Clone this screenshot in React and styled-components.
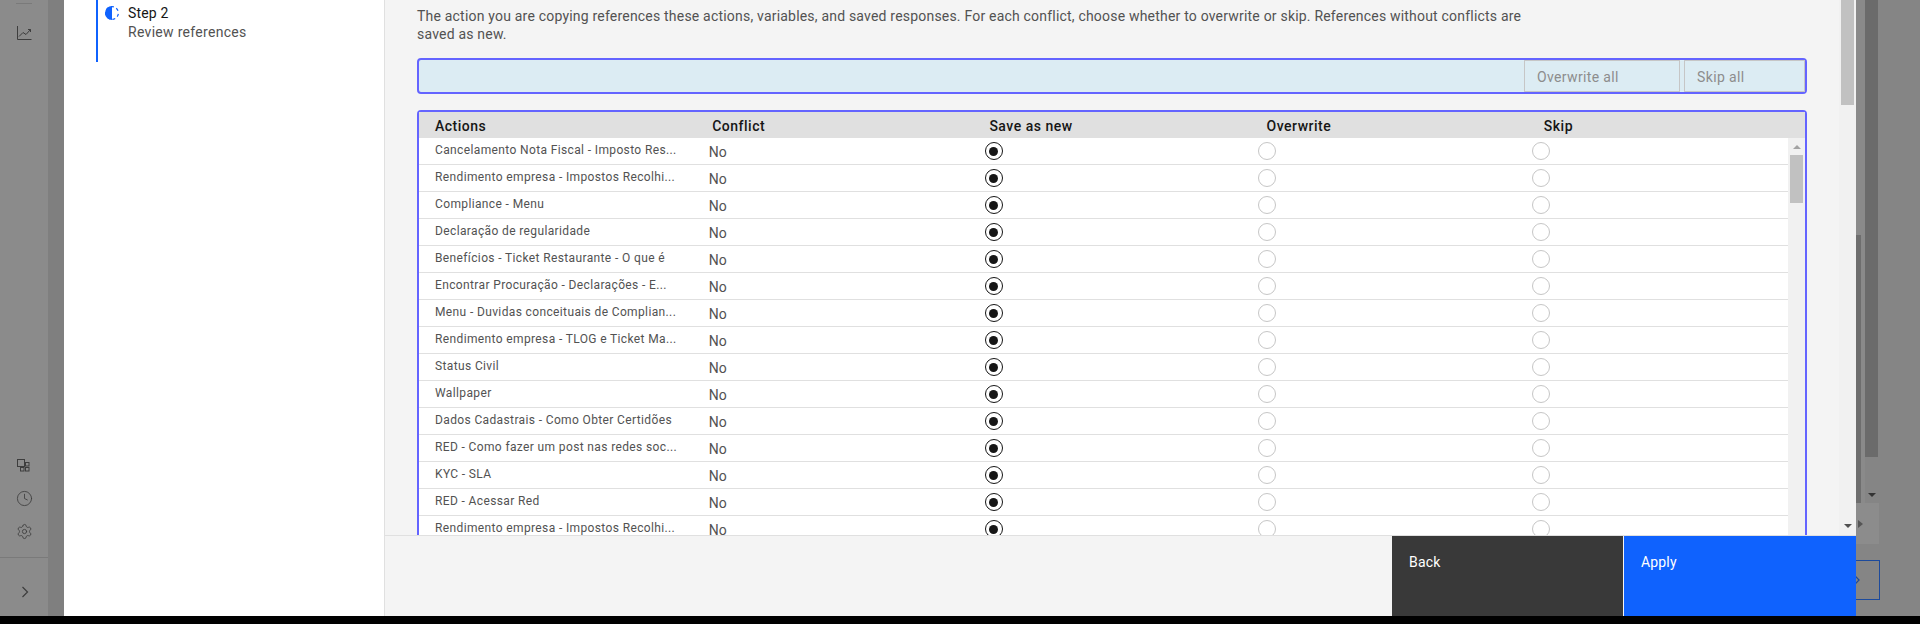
import styled, { createGlobalStyle } from "styled-components";
import { Clock, Settings } from "lucide-react";

const GlobalStyle = createGlobalStyle`
  html, body {
    margin: 0;
    padding: 0;
    background: #000;
    font-family: Roboto, "Noto Sans", sans-serif;
  }
  * {
    box-sizing: border-box;
  }
`;

const Page = styled.div`
  display: flex;
  height: 616px;
  overflow: hidden;
  background: #8b8b8b;
`;

const BlackBar = styled.div`
  height: 8px;
  background: #000;
`;

const Rail = styled.nav`
  width: 48px;
  display: flex;
  flex-direction: column;
  justify-content: space-between;
  align-items: center;
  color: #3d3d3d;
  background: #8b8b8b;
`;

const RailTop = styled.div`
  display: flex;
  flex-direction: column;
  align-items: center;
  padding-top: 3px;
`;

const RailLine = styled.div`
  width: 16px;
  height: 1px;
  background: #7a7a7a;
  margin-bottom: 21px;
`;

const RailBottom = styled.div`
  width: 100%;
  display: flex;
  flex-direction: column;
  align-items: center;
  gap: 16px;
`;

const RailFoot = styled.div`
  width: 100%;
  height: 59px;
  margin-top: 1px;
  padding: 9px 0 0 1px;
  display: flex;
  align-items: center;
  justify-content: center;
  border-top: 1px solid #7a7a7a;
`;

const SwitcherSvg = styled.svg`
  margin-bottom: 2px;
`;

const Gutter = styled.div`
  width: 16px;
  background: #7f7f7f;
`;

const Modal = styled.div`
  width: 1792px;
  display: flex;
  background: #fff;
`;

const Steps = styled.aside`
  width: 320px;
  padding-left: 32px;
  background: #fff;
`;

const Step = styled.div`
  height: 62px;
  display: flex;
  gap: 9px;
  padding: 6px 0 0 7px;
  border-left: 2px solid #0f62fe;
`;

const StepTitle = styled.div`
  font-size: 14px;
  line-height: 14px;
  letter-spacing: 0.16px;
  color: #161616;
`;

const StepSub = styled.div`
  font-size: 14px;
  line-height: 18px;
  margin-top: 3px;
  letter-spacing: 0.3px;
  color: #525252;
`;

const Main = styled.div`
  flex: 1;
  min-width: 0;
  display: flex;
  flex-direction: column;
  border-left: 1px solid #e0e0e0;
  background: #f4f4f4;
`;

const Upper = styled.div`
  height: 535px;
  display: flex;
  overflow: hidden;
`;

const Content = styled.div`
  flex: 1;
  min-width: 0;
  padding: 7px 32px 0 32px;
`;

const Intro = styled.p`
  margin: 0 0 15px;
  max-width: 1120px;
  font-size: 14px;
  line-height: 18px;
  letter-spacing: 0.2px;
  color: #525252;
`;

const Outlined = styled.div`
  border: 2px solid #6464ff;
  border-radius: 4px;
`;

const ActionBar = styled(Outlined)`
  height: 36px;
  display: flex;
  justify-content: flex-end;
  gap: 4px;
  background: #dcecf3;
  margin-bottom: 16px;
`;

const BarButton = styled.div`
  width: ${(props) => props.$width}px;
  padding: 1px 0 0 12px;
  display: flex;
  align-items: center;
  font-size: 14px;
  letter-spacing: 0.36px;
  color: #8d8d8d;
  border: 1px solid #c6c6c6;
`;

const Table = styled(Outlined)`
  border-bottom: none;
  border-radius: 4px 4px 0 0;
`;

const Columns = styled.div`
  display: grid;
  grid-template-columns: repeat(5, 1fr);
`;

const HeadRow = styled(Columns)`
  height: 26px;
  padding-top: 1px;
  align-items: center;
  background: #e0e0e0;
`;

const HeadCell = styled.div`
  padding-left: 16px;
  font-size: 14px;
  font-weight: 500;
  letter-spacing: 0.5px;
  color: #161616;
`;

const TableBody = styled.div`
  display: flex;
`;

const Rows = styled.div`
  flex: 1;
  min-width: 0;
  background: #fff;
`;

const Row = styled(Columns)`
  height: 27px;
  border-bottom: 1px solid #e0e0e0;
`;

const NameCell = styled.div`
  padding: 4px 0 0 16px;
  font-size: 12px;
  line-height: 16px;
  letter-spacing: 0.37px;
  white-space: nowrap;
  color: #525252;
`;

const ConflictCell = styled.div`
  padding: 5px 0 0 16px;
  font-size: 14px;
  line-height: 18px;
  color: #525252;
`;

const RadioCell = styled.div`
  padding: 4px 0 0 18px;
`;

const Radio = styled.span`
  display: flex;
  align-items: center;
  justify-content: center;
  width: 18px;
  height: 18px;
  border-radius: 50%;
  border: 1px solid ${(props) => (props.$checked ? "#161616" : "#c6c6c6")};
  &::after {
    content: "";
    width: 9px;
    height: 9px;
    border-radius: 50%;
    background: ${(props) => (props.$checked ? "#161616" : "transparent")};
  }
`;

const Scrollbar = styled.div`
  width: 17px;
  flex-shrink: 0;
  display: flex;
  flex-direction: column;
  align-items: center;
  background: #f1f1f1;
`;

const ScrollThumb = styled.div`
  width: 13px;
  height: ${(props) => props.$height}px;
  background: #c1c1c1;
`;

const ArrowUp = styled.div`
  width: 0;
  height: 0;
  margin: 7px 0 6px;
  border-left: 4px solid transparent;
  border-right: 4px solid transparent;
  border-bottom: 4px solid #a3a3a3;
`;

const ArrowDown = styled.div`
  width: 0;
  height: 0;
  margin-top: ${(props) => props.$top}px;
  border-left: 4px solid transparent;
  border-right: 4px solid transparent;
  border-top: 4px solid ${(props) => props.$color};
`;

const Footer = styled.footer`
  height: 81px;
  display: flex;
  justify-content: flex-end;
  gap: 1px;
  border-top: 1px solid #e0e0e0;
`;

const FooterButton = styled.button`
  width: ${(props) => props.$width}px;
  padding: 16px 16px 16px 17px;
  border: none;
  display: flex;
  align-items: flex-start;
  font-family: inherit;
  font-size: 14px;
  line-height: 20px;
  letter-spacing: 0.16px;
  color: #fff;
  background: ${(props) => props.$bg};
`;

const Behind = styled.div`
  flex: 1;
  display: flex;
  flex-direction: column;
  overflow: hidden;
  background: #858585;
`;

const BehindTop = styled.div`
  height: 503px;
  display: flex;
`;

const NarrowTrack = styled.div`
  width: 9px;
  padding-top: 235px;
  background: #8a8a8a;
`;

const NarrowThumb = styled.div`
  width: 5px;
  height: 100%;
  background: #6e6e6e;
`;

const WideTrack = styled.div`
  width: 13px;
  display: flex;
  flex-direction: column;
  align-items: center;
`;

const WideThumb = styled.div`
  width: 13px;
  height: 457px;
  background: #6b6b6b;
`;

const Pager = styled.div`
  width: 23px;
  height: 41px;
  padding-left: 2px;
  display: flex;
  align-items: center;
  background: #8c8c8c;
`;

const PagerArrow = styled.div`
  width: 0;
  height: 0;
  border-top: 4px solid transparent;
  border-bottom: 4px solid transparent;
  border-left: 5px solid #555;
`;

const GhostButton = styled.div`
  width: 24px;
  height: 40px;
  margin-top: 16px;
  display: flex;
  align-items: center;
  color: #1c4a9c;
  border: 1px solid #1c4a9c;
  border-left: none;
`;

const GhostChevron = styled.span`
  display: flex;
  margin-left: -4px;
`;

const names = [
  "Cancelamento Nota Fiscal - Imposto Res...",
  "Rendimento empresa - Impostos Recolhi...",
  "Compliance - Menu",
  "Declaração de regularidade",
  "Benefícios - Ticket Restaurante - O que é",
  "Encontrar Procuração - Declarações - E...",
  "Menu - Duvidas conceituais de Complian...",
  "Rendimento empresa - TLOG e Ticket Ma...",
  "Status Civil",
  "Wallpaper",
  "Dados Cadastrais - Como Obter Certidões",
  "RED - Como fazer um post nas redes soc...",
  "KYC - SLA",
  "RED - Acessar Red",
  "Rendimento empresa - Impostos Recolhi...",
];

const ChartIcon = () => (
  <svg width="16" height="16" viewBox="0 0 16 16" fill="none" stroke="currentColor" strokeWidth="1">
    <path d="M1.5 1v13.5H15.5" />
    <path d="M3 11.5l4-4 3 2 4.5-5M12 4.5h2.5V7" />
  </svg>
);

const SwitcherIcon = () => (
  <SwitcherSvg width="14" height="13" viewBox="0 0 14 13" fill="none" stroke="currentColor" strokeWidth="1">
    <rect x="0.5" y="0.5" width="7" height="7" />
    <rect x="3.5" y="8.5" width="3.5" height="3.5" />
    <rect x="8.5" y="8.5" width="3.5" height="3.5" />
    <rect x="8.5" y="3.5" width="3.5" height="3.5" />
  </SwitcherSvg>
);

const HalfCircle = () => (
  <svg width="14" height="14" viewBox="0 0 14 14">
    <circle cx="7" cy="7" r="6.4" fill="none" stroke="#0f62fe" strokeWidth="1.2" strokeDasharray="3 2.6" strokeDashoffset="-1" pathLength="40" />
    <path d="M7 0a7 7 0 0 0 0 14z" fill="#0f62fe" />
  </svg>
);

const Chevron = ({ size = 12, width = 1.2 }) => (
  <svg width={size} height={size} viewBox="0 0 12 12" fill="none" stroke="currentColor" strokeWidth={width}>
    <path d="M3.5 1l5 5-5 5" />
  </svg>
);

const App = () => {
  return (
    <>
      <GlobalStyle />
      <Page>
        <Rail>
          <RailTop>
            <RailLine />
            <ChartIcon />
          </RailTop>
          <RailBottom>
            <SwitcherIcon />
            <Clock size={17} strokeWidth={1.2} />
            <Settings size={17} strokeWidth={1.2} />
            <RailFoot>
              <Chevron />
            </RailFoot>
          </RailBottom>
        </Rail>
        <Gutter />
        <Modal>
          <Steps>
            <Step>
              <HalfCircle />
              <div>
                <StepTitle>Step 2</StepTitle>
                <StepSub>Review references</StepSub>
              </div>
            </Step>
          </Steps>
          <Main>
            <Upper>
              <Content>
                <Intro>
                  The action you are copying references these actions, variables, and saved responses. For each conflict, choose whether to overwrite or skip. References without conflicts are saved as new.
                </Intro>
                <ActionBar>
                  <BarButton $width={156}>Overwrite all</BarButton>
                  <BarButton $width={121}>Skip all</BarButton>
                </ActionBar>
                <Table>
                  <HeadRow>
                    <HeadCell>Actions</HeadCell>
                    <HeadCell>Conflict</HeadCell>
                    <HeadCell>Save as new</HeadCell>
                    <HeadCell>Overwrite</HeadCell>
                    <HeadCell>Skip</HeadCell>
                  </HeadRow>
                  <TableBody>
                    <Rows>
                      {names.map((name, i) => (
                        <Row key={i}>
                          <NameCell>{name}</NameCell>
                          <ConflictCell>No</ConflictCell>
                          <RadioCell><Radio $checked /></RadioCell>
                          <RadioCell><Radio /></RadioCell>
                          <RadioCell><Radio /></RadioCell>
                        </Row>
                      ))}
                    </Rows>
                    <Scrollbar>
                      <ArrowUp />
                      <ScrollThumb $height={48} />
                    </Scrollbar>
                  </TableBody>
                </Table>
              </Content>
              <Scrollbar>
                <ScrollThumb $height={105} />
                <ArrowDown $top={419} $color="#505050" />
              </Scrollbar>
            </Upper>
            <Footer>
              <FooterButton $width={231} $bg="#393939">Back</FooterButton>
              <FooterButton $width={232} $bg="#0f62fe">Apply</FooterButton>
            </Footer>
          </Main>
        </Modal>
        <Behind>
          <BehindTop>
            <NarrowTrack>
              <NarrowThumb />
            </NarrowTrack>
            <WideTrack>
              <WideThumb />
              <ArrowDown $top={36} $color="#333" />
            </WideTrack>
          </BehindTop>
          <Pager>
            <PagerArrow />
          </Pager>
          <GhostButton>
            <GhostChevron>
              <Chevron size={10} width={1.4} />
            </GhostChevron>
          </GhostButton>
        </Behind>
      </Page>
      <BlackBar />
    </>
  );
};

export default App;
